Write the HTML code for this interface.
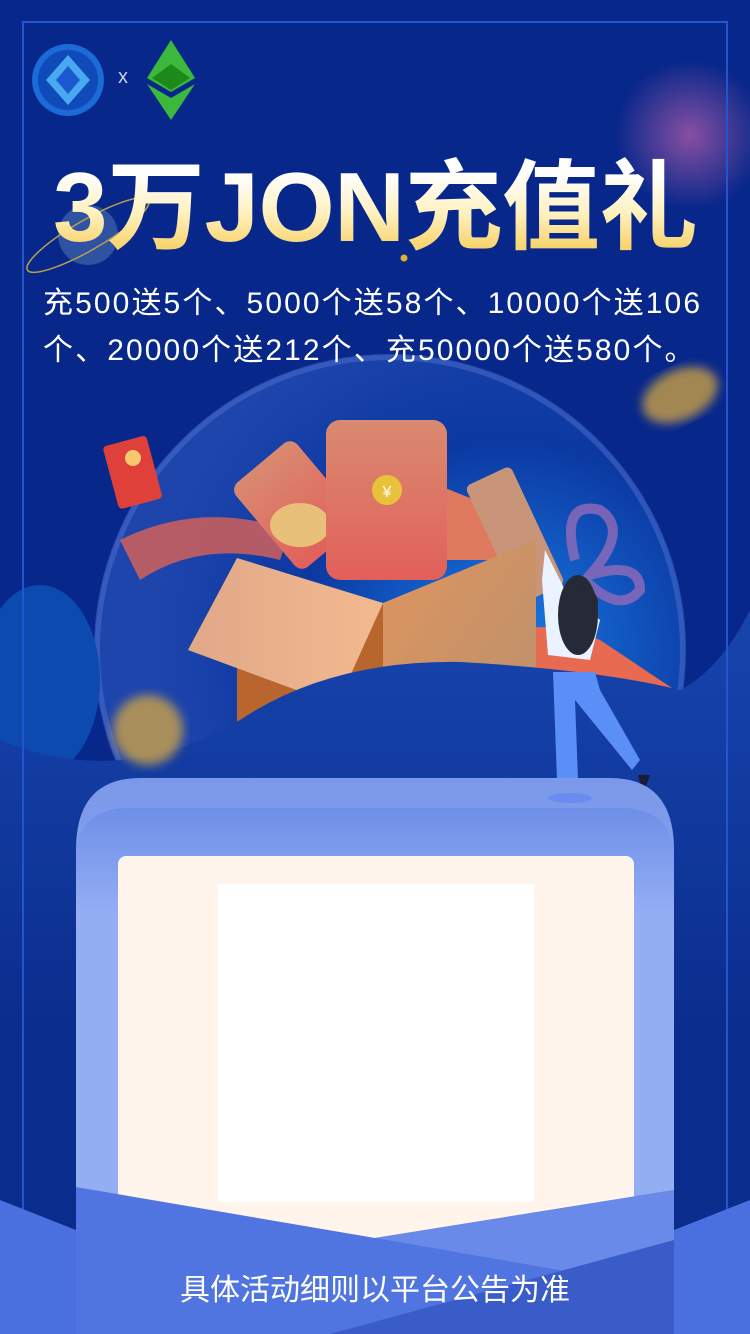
<!DOCTYPE html>
<html><head><meta charset="utf-8"><style>
html,body{margin:0;padding:0;}
body{width:750px;height:1334px;overflow:hidden;position:relative;background:#07278a;font-family:"Liberation Sans","Noto Sans CJK SC",sans-serif;}
.abs{position:absolute;}
.title{left:0;width:750px;top:152px;text-align:center;font-size:98px;font-weight:bold;letter-spacing:-0.5px;line-height:110px;
background:linear-gradient(180deg,#ffffff 20%,#fff1c0 55%,#f9d572 85%);-webkit-background-clip:text;background-clip:text;color:transparent;}
.sub{left:43px;top:280px;width:700px;color:#fff;font-size:30px;line-height:47px;letter-spacing:2.1px;white-space:nowrap;}
.foot{left:0;width:750px;top:1265px;text-align:center;color:#fff;font-size:30px;}
</style></head><body>
<svg class="abs" style="left:0;top:0" width="750" height="1334" viewBox="0 0 750 1334">
<defs>
<radialGradient id="sph" cx="0.7" cy="0.5" r="0.6">
<stop offset="0" stop-color="#1b86f0"/><stop offset="0.6" stop-color="#0c3aa4"/><stop offset="1" stop-color="#2048b0"/></radialGradient>
<radialGradient id="glow" cx="0.5" cy="0.5" r="0.5"><stop offset="0" stop-color="#a85aa8" stop-opacity="0.8"/><stop offset="1" stop-color="#a85aa8" stop-opacity="0"/></radialGradient>
<linearGradient id="card" x1="0" y1="0" x2="0" y2="1"><stop offset="0" stop-color="#6e8ee8"/><stop offset="0.2" stop-color="#94aef4"/><stop offset="1" stop-color="#94aef4"/></linearGradient>
<linearGradient id="cardtop" x1="0" y1="0" x2="0" y2="1"><stop offset="0" stop-color="#7b98ea"/><stop offset="1" stop-color="#a6bcf6"/></linearGradient>
<linearGradient id="env" x1="0" y1="0" x2="0" y2="1"><stop offset="0" stop-color="#d98a70"/><stop offset="1" stop-color="#e2605a"/></linearGradient>
<linearGradient id="boxl" x1="0" y1="0" x2="1" y2="0"><stop offset="0" stop-color="#e0a888"/><stop offset="1" stop-color="#f3b98f"/></linearGradient>
<linearGradient id="boxr" x1="0" y1="0" x2="1" y2="1"><stop offset="0" stop-color="#e0955e"/><stop offset="1" stop-color="#b8906e"/></linearGradient>
<linearGradient id="bg" x1="0" y1="0" x2="0" y2="1"><stop offset="0" stop-color="#1745ad"/><stop offset="0.6" stop-color="#0a2c8c"/><stop offset="1" stop-color="#0a2c8c"/></linearGradient>
<filter id="bl"><feGaussianBlur stdDeviation="5"/></filter>
</defs>
<rect width="750" height="1334" fill="#07278a"/>
<circle cx="690" cy="135" r="75" fill="url(#glow)"/>
<circle cx="390" cy="650" r="295" fill="url(#sph)" opacity="0.9"/>
<circle cx="390" cy="650" r="293" fill="none" stroke="#4d6fd0" stroke-width="6" opacity="0.5"/>
<ellipse cx="40" cy="680" rx="60" ry="95" fill="#0d4ab0"/>
<path d="M120 540 Q200 500 290 530 L280 560 Q200 540 140 580Z" fill="#d0605a" opacity="0.85"/>
<path d="M460 650 Q530 610 600 640 L690 700 L670 700 Q600 660 520 680Z" fill="#e86a50"/>
<rect x="256" y="450" width="80" height="110" rx="10" fill="url(#env)" transform="rotate(-40 296 505)"/>
<path d="M400 470 L500 510 L500 560 L400 560Z" fill="#e07a5e"/>
<rect x="490" y="470" width="50" height="130" rx="6" fill="#c8947a" transform="rotate(-25 515 535)"/>
<ellipse cx="300" cy="525" rx="30" ry="22" fill="#e8c07a"/>
<rect x="326" y="420" width="121" height="160" rx="14" fill="url(#env)"/>
<circle cx="387" cy="490" r="15" fill="#e8c23a"/>
<text x="387" y="497" text-anchor="middle" fill="#fff" font-size="16" font-family="Liberation Sans">¥</text>
<rect x="110" y="440" width="45" height="65" rx="4" fill="#e0403a" transform="rotate(-15 132 472)"/>
<circle cx="133" cy="458" r="8" fill="#f8c870"/>
<path d="M237 605 L383 603 L383 760 L237 760Z" fill="#b8652e"/>
<path d="M383 603 L536 540 L536 760 L383 760Z" fill="url(#boxr)"/>
<path d="M188 650 L237 558 L383 603 L337 705Z" fill="url(#boxl)"/>
<path d="M575 560 Q560 500 600 510 Q630 530 590 575 Q640 560 640 590 Q620 615 585 580" fill="none" stroke="#8a6ab8" stroke-width="10" opacity="0.85"/>
<path d="M0 740 Q120 790 240 720 Q330 660 460 662 Q600 670 680 690 Q720 670 750 610 L750 1334 L0 1334Z" fill="url(#bg)"/>
<circle cx="148" cy="730" r="35" fill="#d8a840" opacity="0.75" filter="url(#bl)"/>
<ellipse cx="680" cy="395" rx="40" ry="25" fill="#d8a840" opacity="0.75" transform="rotate(-25 680 395)" filter="url(#bl)"/>
<path d="M545 550 L542 580 L548 655 L590 660 L600 620 L565 590Z" fill="#eaf3ff"/>
<ellipse cx="578" cy="615" rx="20" ry="40" fill="#262a36"/>
<circle cx="582" cy="603" r="16" fill="#262a36"/>
<path d="M553 672 L557 780 L578 780 L575 700 L632 770 L640 760 L600 690 L595 672Z" fill="#5a8ff8"/>
<path d="M558 795 L582 793 L580 800 L560 802Z" fill="#1a1a3a"/>
<path d="M638 775 L650 775 L643 795Z" fill="#1a1a3a"/>
<circle cx="88" cy="235" r="30" fill="#3a5fa8" opacity="0.8"/>
<ellipse cx="88" cy="235" rx="70" ry="15" fill="none" stroke="#b8a050" stroke-width="1.5" transform="rotate(-30 88 235)"/>
<circle cx="404" cy="258" r="3.5" fill="#e0b030"/>
<rect x="23" y="22" width="704" height="1320" fill="none" stroke="#2355d0" stroke-width="2"/>
<path d="M0 1200 L76 1230 L76 1334 L0 1334Z" fill="#4a6fde"/>
<path d="M750 1200 L674 1230 L674 1334 L750 1334Z" fill="#4a6fde"/>
<path d="M76 850 Q76 778 140 778 L610 778 Q674 778 674 850 L674 1334 L76 1334Z" fill="url(#cardtop)"/>
<path d="M76 860 Q76 808 130 808 L620 808 Q674 808 674 860 L674 1334 L76 1334Z" fill="url(#card)"/>
<rect x="118" y="856" width="516" height="400" rx="8" fill="#fff5ec"/>
<rect x="218" y="884" width="316" height="318" rx="3" fill="#ffffff"/>
<path d="M76 1187 L375 1238 L674 1190 L674 1334 L76 1334Z" fill="#5075e0"/>
<path d="M375 1238 L674 1190 L674 1290Z" fill="#6a8aea"/>
<path d="M330 1334 L674 1240 L674 1334Z" fill="#3a5cc8"/>
<ellipse cx="570" cy="798" rx="22" ry="5" fill="#6a8cf0"/>
<circle cx="68" cy="80" r="36" fill="#1a6ad8"/>
<circle cx="68" cy="80" r="30" fill="#0e4ab8"/>
<path d="M68 55 L90 80 L68 105 L46 80Z" fill="#4aa8f0"/>
<path d="M68 66 L80 80 L68 94 L56 80Z" fill="#1a5ad0"/>
<text x="118" y="83" fill="#c8d0e8" font-size="20" font-family="Liberation Sans">x</text>
<path d="M171 40 L195 78 L171 92 L147 78Z" fill="#3cb83c"/>
<path d="M171 64 L190 78 L171 90 L152 78Z" fill="#1b8a1b"/>
<path d="M171 98 L195 84 L171 120 L147 84Z" fill="#3cb83c"/>
</svg>
<div class="abs title">3万JON充值礼</div>
<div class="abs sub">充500送5个、5000个送58个、10000个送106<br>个、20000个送212个、充50000个送580个。</div>
<div class="abs foot">具体活动细则以平台公告为准</div>
</body></html>
